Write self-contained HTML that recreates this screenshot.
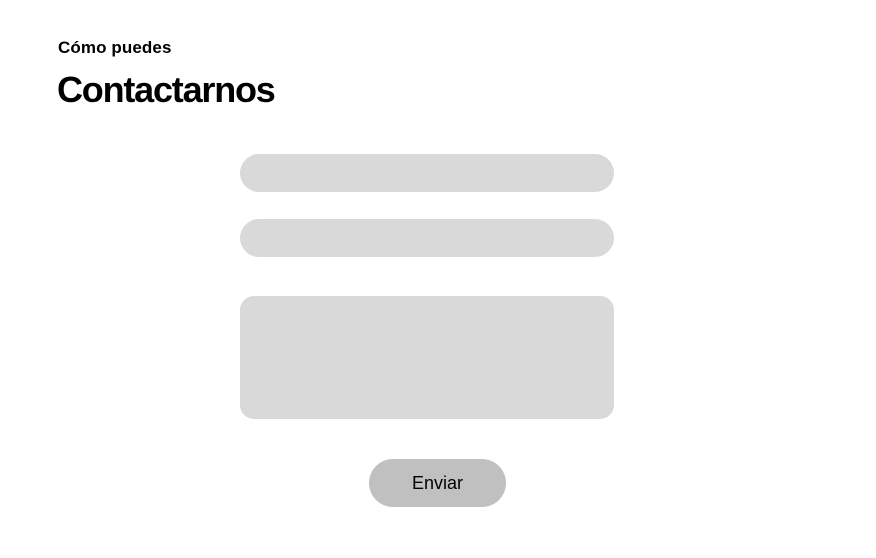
<!DOCTYPE html>
<html><head><style>
body{margin:0;width:876px;height:558px;background:#fff;position:relative;font-family:"Liberation Sans",Arial,sans-serif;overflow:hidden}
.a{position:absolute}
.f{background:#d9d9d9;left:240px;width:374px}
</style></head><body>
<div class="a" style="left:58px;top:38px;font-size:17px;font-weight:bold;letter-spacing:0.1px">Cómo puedes</div>
<div class="a" style="left:57px;top:69px;font-size:36px;font-weight:bold;letter-spacing:-1.2px">Contactarnos</div>
<div class="a f" style="top:154px;height:38px;border-radius:19px"></div>
<div class="a f" style="top:219px;height:38px;border-radius:19px"></div>
<div class="a f" style="top:296px;height:123px;border-radius:14px"></div>
<div class="a" style="left:369px;top:459px;width:137px;height:48px;border-radius:24px;background:#c0c0c0;text-align:center;line-height:48px;font-size:18px">Enviar</div>
</body></html>
